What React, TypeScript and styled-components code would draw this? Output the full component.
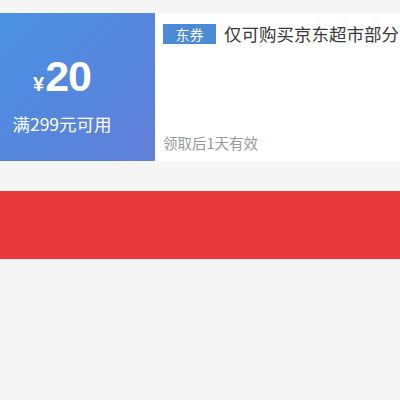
import React from "react";
import styled, { createGlobalStyle } from "styled-components";

const GlobalStyle = createGlobalStyle`
    html, body {
        margin: 0;
        padding: 0;
        background: #f5f5f5;
        font-family: "Noto Sans CJK SC", "Liberation Sans", sans-serif;
    }
`;

const Page = styled.div`
    width: 400px;
    height: 400px;
    padding-top: 13px;
    box-sizing: border-box;
    background: #f5f5f5;
    overflow: hidden;
`;

const Coupon = styled.div`
    display: flex;
    height: 148px;
    background: #fff;
`;

const ValuePanel = styled.div`
    width: 155px;
    flex-shrink: 0;
    background: linear-gradient(135deg, #4a91e1 0%, #5686dd 55%, #6280dc 100%);
    color: #fff;
    display: flex;
    flex-direction: column;
    align-items: center;
    padding: 39px 31px 0 0;
    box-sizing: border-box;
`;

const Amount = styled.div`
    display: flex;
    align-items: baseline;
    height: 48px;
    line-height: 48px;
`;

const Yen = styled.span`
    font-family: "Liberation Sans", sans-serif;
    font-size: 20px;
    font-weight: bold;
    margin-right: 1px;
`;

const Number = styled.span`
    font-family: "Liberation Sans", sans-serif;
    font-size: 43px;
    font-weight: bold;
    letter-spacing: -1px;
`;

const Condition = styled.div`
    margin-top: 12px;
    margin-right: -31px;
    padding-right: 31px;
    font-size: 17.5px;
    line-height: 24px;
    white-space: nowrap;
`;

const InfoPanel = styled.div`
    flex: 1;
    min-width: 0;
    display: flex;
    flex-direction: column;
    justify-content: space-between;
    padding: 9px 0 8px 8px;
`;

const TitleRow = styled.div`
    display: flex;
    align-items: center;
    white-space: nowrap;
    overflow: hidden;
`;

const Tag = styled.span`
    flex-shrink: 0;
    background: #4a8ad6;
    color: #fff;
    font-size: 14px;
    line-height: 20px;
    width: 53px;
    text-align: center;
    margin-right: 8px;
`;

const Title = styled.span`
    font-size: 17.5px;
    color: #3a3a3a;
    line-height: 24px;
`;

const Validity = styled.div`
    font-size: 14.5px;
    color: #999;
    line-height: 20px;
`;

const ActionBar = styled.div`
    margin-top: 30px;
    height: 68px;
    background: #e8393d;
`;

export default function App() {
    return (
        <Page>
            <GlobalStyle />
            <Coupon>
                <ValuePanel>
                    <Amount>
                        <Yen>¥</Yen>
                        <Number>20</Number>
                    </Amount>
                    <Condition>满299元可用</Condition>
                </ValuePanel>
                <InfoPanel>
                    <TitleRow>
                        <Tag>东券</Tag>
                        <Title>仅可购买京东超市部分</Title>
                    </TitleRow>
                    <Validity>领取后1天有效</Validity>
                </InfoPanel>
            </Coupon>
            <ActionBar />
        </Page>
    );
}
